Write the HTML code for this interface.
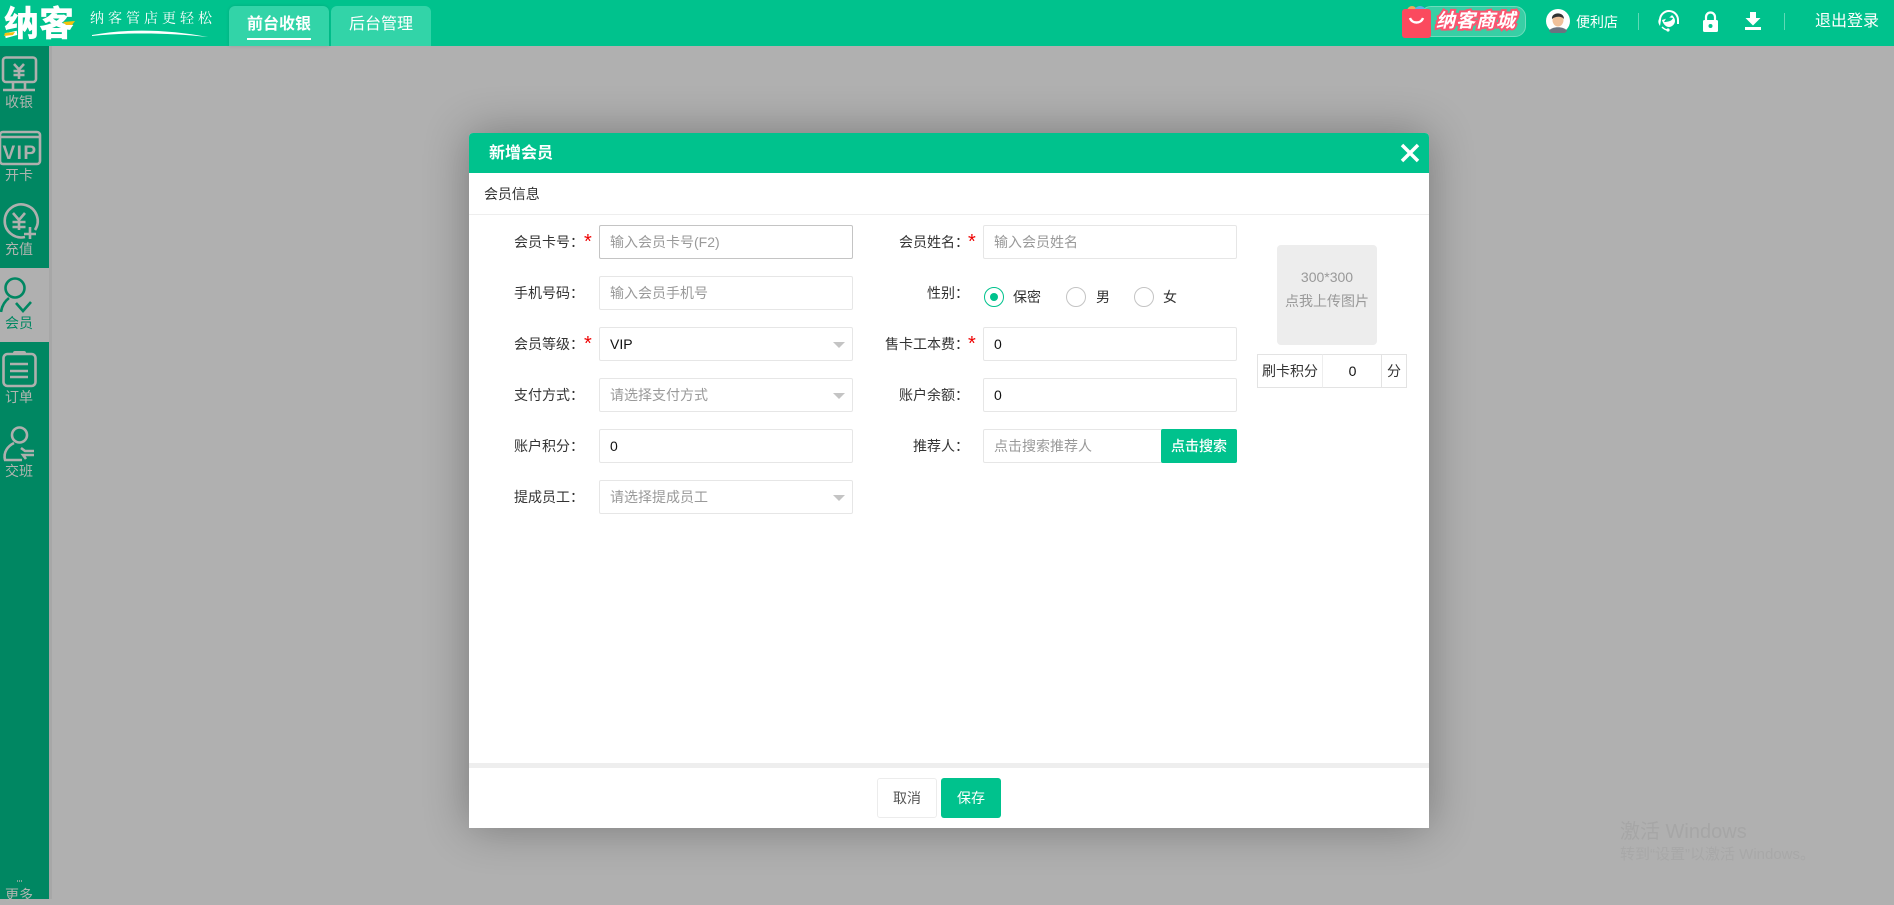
<!DOCTYPE html>
<html lang="zh"><head><meta charset="utf-8"><title>新增会员</title>
<style>
*{box-sizing:border-box;margin:0;padding:0}
html,body{width:1894px;height:899px;overflow:hidden;background:#b0b0b0;font-family:"Liberation Sans","Noto Sans CJK SC",sans-serif;font-size:14px;color:#333}
.a{position:absolute;white-space:nowrap}
#hd{left:0;top:0;width:1894px;height:46px;background:#00c28d}
.tab{top:6px;height:40px;width:100px;background:#32d4a8;border-radius:6px 6px 0 0;color:#fff;font-size:16px;line-height:38px;text-align:center}
#side{left:0;top:46px;width:49px;height:853px;background:#008762}
#strip{left:49px;top:46px;width:3px;height:853px;background:#a7a7a7}
.sl{left:0;width:38px;text-align:center;color:#b0b5b0;font-size:14px;line-height:20px;height:20px}
#dlg{left:469px;top:133px;width:960px;height:695px;background:#fff;border-radius:4px 4px 0 0;box-shadow:0 0 45px rgba(0,0,0,.32)}
.ab{position:absolute;white-space:nowrap}
.lb{text-align:right;height:20px;line-height:20px;color:#333;font-size:14px;width:120px}
.in{width:254px;height:34px;border:1px solid #e6e6e6;border-radius:2px;background:#fff;padding-left:10px;line-height:32px;font-size:14px;color:#111}
.ph{color:#999}
.st{color:#e00;font-size:20px;line-height:20px;height:20px;width:10px;font-family:"Liberation Sans",sans-serif}
.ar{position:absolute;right:7px;top:14px;width:0;height:0;border-left:6px solid transparent;border-right:6px solid transparent;border-top:6px solid #c4c4c4}
.rd{width:20px;height:20px;border-radius:50%;border:1.5px solid #c4c4c4;background:#fff}
.cell{top:221px;height:34px;border:1px solid #e3e3e3;text-align:center;line-height:32px}
</style></head><body>
<div class="a" id="hd"></div>

<div class="a" style="left:4px;top:0;font-size:35px;line-height:44px;font-weight:900;color:#fff;font-family:'Noto Sans CJK SC',sans-serif">纳客</div>
<svg class="a" style="left:0;top:0" width="240" height="46"><path d="M5 33l10-1-2 3-9 1z" fill="#f4c20d"/><path d="M63 22l12-1-3 4-6 0z" fill="#f4c20d"/><path d="M92 35C130 28 170 30 208 37C170 33 130 32 92 36z" fill="#fff"/></svg>
<div class="a" style="left:90px;top:6px;font-size:14px;line-height:24px;color:#fff;letter-spacing:4px;font-family:'Noto Serif CJK SC',serif">纳客管店更轻松</div>

<div class="a tab" style="left:229px;font-weight:700;box-shadow:0 0 3px rgba(0,0,0,.12)">前台收银</div>
<div class="a" style="left:247px;top:38px;width:64px;height:2px;background:#fff"></div>
<div class="a tab" style="left:331px">后台管理</div>

<div class="a" style="left:1420px;top:6px;width:106px;height:31px;border-radius:11px;background:#38cfa5;border:1px solid #6fdcbd"></div>
<svg class="a" style="left:1400px;top:3px" width="36" height="36"><circle cx="12" cy="8" r="5" fill="#f2a65a"/><circle cx="20" cy="9" r="6" fill="#5db1e8"/><rect x="2" y="6" width="29" height="29" rx="3" fill="#fb4a5e"/><path d="M10 15c2 6 11 6 13 0" stroke="#fff" stroke-width="2.4" fill="none"/></svg>
<div class="a" style="left:1436px;top:8px;font-size:19px;line-height:28px;font-weight:700;font-style:italic;color:#fff;letter-spacing:1px;-webkit-text-stroke:4px #fb5570;paint-order:stroke fill">纳客商城</div>

<svg class="a" style="left:1546px;top:9px" width="24" height="24"><circle cx="12" cy="12" r="12" fill="#fff"/><path d="M3 22c2-5 16-5 18 0a12 12 0 0 1-18 0z" fill="#6a7380"/><ellipse cx="12" cy="11" rx="5.5" ry="6.5" fill="#f0c09a"/><path d="M6 10c-1-7 12-8 12 0-2-3-9-3-12 0z" fill="#333"/></svg>
<div class="a" style="left:1576px;top:12px;color:#fff;font-size:14px;line-height:20px">便利店</div>
<div class="a" style="left:1638px;top:13px;width:1px;height:17px;background:#5fd9b6"></div>
<svg class="a" style="left:1658px;top:9px" width="22" height="24" viewBox="0 0 22 24"><path d="M11 1a10 10 0 0 1 10 10v4h-2v-4a8 8 0 0 0-16 0l-1 6C0 14 0 12 1 10A10 10 0 0 1 11 1z" fill="#fff"/><path d="M4 11c3-1 8-2 10-5 2 2 3 4 3 6 0 3-3 6-6 6-3 0-6-3-7-7z" fill="#fff"/><path d="M6 13c4 0 8-1 9-4l-6-1z" fill="#00c28d"/><path d="M4 18c2 2 4 3 6 3" stroke="#fff" stroke-width="1.5" fill="none"/><circle cx="10" cy="21" r="1.6" fill="#fff"/></svg>
<svg class="a" style="left:1702px;top:11px" width="17" height="22" viewBox="0 0 17 22"><path d="M4 10V6a4.500 4.500 0 0 1 9 0v4" fill="none" stroke="#fff" stroke-width="2.2"/><rect x="1" y="9" width="15" height="12" rx="1.5" fill="#fff"/><circle cx="8.500" cy="15" r="2" fill="#00c28d"/></svg>
<svg class="a" style="left:1744px;top:11px" width="18" height="20" viewBox="0 0 18 20"><path d="M6 1h6v6h4.500L9 14.500 1.500 7H6z" fill="#fff"/><rect x="1" y="16" width="16" height="3" fill="#fff"/></svg>
<div class="a" style="left:1784px;top:13px;width:1px;height:17px;background:#5fd9b6"></div>
<div class="a" style="left:1815px;top:11px;color:#fff;font-size:16px;line-height:22px">退出登录</div>

<div class="a" id="side"></div>
<div class="a" style="left:0;top:268px;width:49px;height:74px;background:#b0b0b0"></div>
<div class="a" id="strip"></div>

<svg class="a" style="left:0;top:46px" width="49" height="853" viewBox="0 46 49 853" fill="none" stroke="#aeb0ae" stroke-width="2.6">
<rect x="3" y="57.500" width="33" height="24.500" rx="3"/><path d="M13 82v7M25 82v7M3 90h32"/>
<path d="M14 64l5 5.500 5-5.500M13.500 71h11M13.500 75h11M19 70v9"/>
<rect x="0" y="132" width="40" height="32" rx="3"/><path d="M0 137h40"/>
<text x="20" y="159" text-anchor="middle" font-size="19" font-weight="700" letter-spacing="1.5" fill="#aeb0ae" stroke="none" font-family="Liberation Sans">VIP</text>
<path d="M35 230A16.500 16.500 0 1 0 25 237"/><path d="M30 227v12M24 234h12"/>
<path d="M13 213l6 7 6-7M12.500 222h13M12.500 227h13M19 220v10"/>
<g stroke="#008762"><circle cx="15" cy="288" r="9.500"/><path d="M1 312c1-7 4-11 8-14M16 303l7 8 8-9"/></g>
<rect x="3.500" y="354" width="32" height="32" rx="4"/><path d="M10 364h18M10 371h18M10 377h18"/><path d="M15 353h9" stroke-width="4" stroke-linecap="round"/>
<circle cx="19.500" cy="435" r="7.500"/><path d="M5 460c-2-8 3-14 9-17M4 460h18M21 448l4 3h9M34 455H23l3 4"/>
<path d="M17 881h5" stroke-width="1.500" stroke-dasharray="1 1"/>
</svg>
<div class="a sl" style="top:92px">收银</div>
<div class="a sl" style="top:165px">开卡</div>
<div class="a sl" style="top:239px">充值</div>
<div class="a sl" style="top:313px;color:#008762">会员</div>
<div class="a sl" style="top:387px">订单</div>
<div class="a sl" style="top:461px">交班</div>
<div class="a sl" style="top:885px">更多</div>

<div class="a" id="dlg">
<div class="ab" style="left:0;top:0;width:960px;height:40px;background:#00c28d;border-radius:4px 4px 0 0"></div>
<div class="ab" style="left:20px;top:10px;color:#fff;font-size:16px;font-weight:700;line-height:22px">新增会员</div>
<svg class="ab" style="left:931px;top:10px" width="20" height="20"><path d="M2 2l16 16M18 2L2 18" stroke="#fff" stroke-width="3.500"/></svg>
<div class="ab" style="left:15px;top:51px;font-size:14px;line-height:20px;color:#333;letter-spacing:-.1px">会员信息</div>
<div class="ab" style="left:0;top:81px;width:960px;height:1px;background:#eee"></div>

<div class="ab lb" style="left:-5px;top:99px">会员卡号：</div><div class="ab st" style="left:115px;top:99px">*</div>
<div class="ab in ph" style="left:130px;top:92px;border-color:#c4c4c4">输入会员卡号(F2)</div>
<div class="ab lb" style="left:-5px;top:150px">手机号码：</div>
<div class="ab in ph" style="left:130px;top:143px">输入会员手机号</div>
<div class="ab lb" style="left:-5px;top:201px">会员等级：</div><div class="ab st" style="left:115px;top:201px">*</div>
<div class="ab in" style="left:130px;top:194px">VIP<span class="ar"></span></div>
<div class="ab lb" style="left:-5px;top:252px">支付方式：</div>
<div class="ab in ph" style="left:130px;top:245px">请选择支付方式<span class="ar"></span></div>
<div class="ab lb" style="left:-5px;top:303px">账户积分：</div>
<div class="ab in" style="left:130px;top:296px">0</div>
<div class="ab lb" style="left:-5px;top:354px">提成员工：</div>
<div class="ab in ph" style="left:130px;top:347px">请选择提成员工<span class="ar"></span></div>

<div class="ab lb" style="left:380px;top:99px">会员姓名：</div><div class="ab st" style="left:499px;top:99px">*</div>
<div class="ab in ph" style="left:514px;top:92px">输入会员姓名</div>
<div class="ab lb" style="left:380px;top:150px">性别：</div>
<div class="ab rd" style="left:515px;top:154px;border-color:#00c28d"></div><div class="ab" style="left:521px;top:160px;width:8px;height:8px;border-radius:50%;background:#00c28d"></div>
<div class="ab" style="left:544px;top:154px;line-height:20px">保密</div>
<div class="ab rd" style="left:597px;top:154px"></div><div class="ab" style="left:627px;top:154px;line-height:20px">男</div>
<div class="ab rd" style="left:665px;top:154px"></div><div class="ab" style="left:694px;top:154px;line-height:20px">女</div>
<div class="ab lb" style="left:380px;top:201px">售卡工本费：</div><div class="ab st" style="left:499px;top:201px">*</div>
<div class="ab in" style="left:514px;top:194px">0</div>
<div class="ab lb" style="left:380px;top:252px">账户余额：</div>
<div class="ab in" style="left:514px;top:245px">0</div>
<div class="ab lb" style="left:380px;top:303px">推荐人：</div>
<div class="ab in ph" style="left:514px;top:296px">点击搜索推荐人</div>
<div class="ab" style="left:692px;top:296px;width:76px;height:34px;background:#00c28d;border-radius:2px;color:#fff;font-size:14px;font-weight:500;text-align:center;line-height:34px">点击搜索</div>

<div class="ab" style="left:808px;top:112px;width:100px;height:100px;background:#ededed;border-radius:4px;color:#999;text-align:center;line-height:24px;padding-top:20px">300*300<br>点我上传图片</div>
<div class="ab cell" style="left:788px;width:66px">刷卡积分</div>
<div class="ab cell" style="left:853px;width:60px;border-left:1px solid #eee;border-right:0;color:#111">0</div>
<div class="ab cell" style="left:912px;width:26px">分</div>

<div class="ab" style="left:0;top:630px;width:960px;height:5px;background:#eee"></div>
<div class="ab" style="left:408px;top:645px;width:60px;height:40px;border:1px solid #ececec;border-radius:3px;text-align:center;line-height:38px;color:#555">取消</div>
<div class="ab" style="left:472px;top:645px;width:60px;height:40px;background:#00c28d;border-radius:3px;text-align:center;line-height:40px;color:#fff">保存</div>
</div>

<div class="a" style="left:1620px;top:818px;font-size:20px;line-height:28px;color:#a6a6a6">激活 Windows</div>
<div class="a" style="left:1620px;top:845px;font-size:15px;line-height:20px;color:#a8a8a8">转到“设置”以激活 Windows。</div>
</body></html>
